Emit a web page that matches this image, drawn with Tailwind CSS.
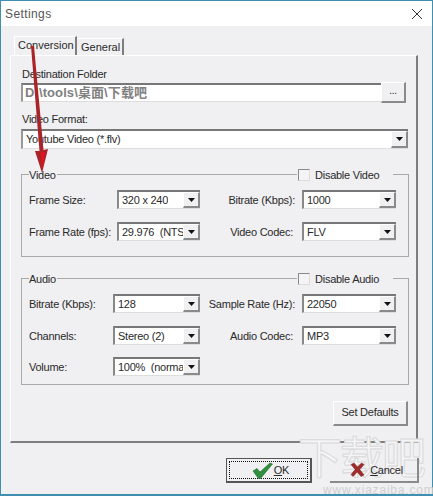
<!DOCTYPE html>
<html><head><meta charset="utf-8"><script src="https://cdn.jsdelivr.net/npm/@tailwindcss/browser@4"></script></head>
<body class="w-[433px] h-[496px] overflow-hidden">
<div class="relative w-[433px] h-[496px] flex flex-col border border-[#3f8fb0] border-b-2 bg-[#f0eff1] text-[#2a2a2a] text-[11px] leading-[14px] tracking-[-0.25px] font-['Liberation_Sans','Noto_Sans_CJK_SC',sans-serif]">
  <!-- watermark -->
  <div class="absolute left-[297px] top-[429px] text-[44px] leading-[50px] whitespace-nowrap tracking-[-2px] text-[#f5f5f6] [-webkit-text-stroke:1px_#d8d8da] font-['Noto_Sans_CJK_SC',sans-serif]">下载吧</div>
  <div class="absolute left-[322px] top-[484px] text-[12px] leading-[11px] text-[#cfcfd1] whitespace-nowrap tracking-[0.8px]">www.xiazaiba.com</div>
  <!-- title -->
  <div class="h-[25px] shrink-0 bg-white flex items-center justify-between pl-[4px] pr-[9px]">
    <span class="text-[12px] text-[#555] tracking-[0.4px]">Settings</span>
    <svg class="w-[12px] h-[12px]" viewBox="0 0 12 12" fill="none" stroke="#333" stroke-width="1"><path d="M1 1 11 11M11 1 1 11"/></svg>
  </div>
  <div class="flex-1 flex flex-col px-[9px] pt-[10px] min-h-0">
    <!-- tabs -->
    <div class="flex items-end h-[19px] pl-[4px] shrink-0 relative z-10">
      <div class="w-[63px] h-[19px] pl-[3px] pt-[1px] bg-[#f0eff1] border-t border-l border-white border-r-2 border-r-[#7d7d7d] tracking-normal">Conversion</div>
      <div class="w-[47px] h-[17px] pl-[4px] pt-[1px] bg-[#f0eff1] border-t border-white border-r-2 border-r-[#7d7d7d] tracking-normal">General</div>
    </div>
    <!-- page -->
    <div class="w-[408px] h-[388px] shrink-0 border border-l-white border-t-white border-r-2 border-r-[#7d7d7d] border-b-2 border-b-[#7d7d7d] px-[10px] pt-[11px]">
      <div class="h-[14px] pl-[1px]">Destination Folder</div>
      <div class="flex items-center mt-[1px] h-[21px]">
        <div class="w-[364px] h-[19px] bg-white border-t-2 border-t-[#777] border-l-2 border-l-[#999] border-b border-b-[#ddd] pl-[2px] font-bold text-[#808080] text-[13px] leading-[16px] tracking-[0.1px]">D:\tools\桌面\下载吧</div>
        <div class="w-[25px] h-[21px] bg-[#f0eff1] border-t border-l border-white border-r-2 border-b-2 border-r-[#8a8a8a] border-b-[#8a8a8a] text-[10px] text-center leading-[15px]">...</div>
      </div>
      <div class="h-[14px] mt-[9px] pl-[1px]">Video Format:</div>
      <div class="mt-[3px] w-[387px] h-[20px] bg-white border-t-2 border-t-[#777] border-l-2 border-l-[#999] border-b border-b-[#ddd] flex justify-between">
        <span class="pl-[3px] leading-[17px]">Youtube Video (*.flv)</span>
        <span class="w-[17px] h-[17px] bg-[#f0eff1] border-t border-l border-white border-r-2 border-b-2 border-r-[#8a8a8a] border-b-[#8a8a8a] flex items-center justify-center"><svg width="7" height="4" viewBox="0 0 7 4"><path d="M0 0h7L3.5 4z" fill="#111"/></svg></span>
      </div>
      <!-- Video -->
      <div class="relative mt-[25px] w-[388px] h-[83px] border border-[#a9a9a9] pt-[15px]">
        <span class="absolute left-[7px] -top-[7px] bg-[#f0eff1] pr-[1px]">Video</span>
        <div class="absolute left-[275px] -top-[7px] w-[96px] h-[14px] bg-[#f0eff1] flex items-center">
          <span class="w-[12px] h-[12px] ml-[1px] bg-[#f4f3f5] border-t border-l border-[#8a8a8a] border-r border-r-[#ddd] border-b border-b-[#ddd]"></span><span class="ml-[5px] whitespace-nowrap">Disable Video</span>
        </div>
        <div class="flex h-[19px] items-center">
          <span class="w-[95px] pl-[7px] shrink-0">Frame Size:</span>
          <div class="w-[83px] h-[19px] shrink-0 bg-white border-t-2 border-t-[#777] border-l-2 border-l-[#888] border-b border-b-[#ddd] flex justify-between"><span class="pl-[3px] leading-[16px] overflow-hidden whitespace-nowrap">320 x 240</span><span class="w-[17px] h-[16px] shrink-0 bg-[#f0eff1] border-t border-l border-white border-r-2 border-b-2 border-r-[#8a8a8a] border-b-[#8a8a8a] flex items-center justify-center"><svg width="7" height="4" viewBox="0 0 7 4"><path d="M0 0h7L3.5 4z" fill="#111"/></svg></span></div>
          <span class="w-[102px] shrink-0 text-right pr-[7px] whitespace-nowrap">Bitrate (Kbps):</span>
          <div class="w-[94px] h-[19px] shrink-0 bg-white border-t-2 border-t-[#777] border-l-2 border-l-[#888] border-b border-b-[#ddd] flex justify-between"><span class="pl-[3px] leading-[16px]">1000</span><span class="w-[17px] h-[16px] shrink-0 bg-[#f0eff1] border-t border-l border-white border-r-2 border-b-2 border-r-[#8a8a8a] border-b-[#8a8a8a] flex items-center justify-center"><svg width="7" height="4" viewBox="0 0 7 4"><path d="M0 0h7L3.5 4z" fill="#111"/></svg></span></div>
        </div>
        <div class="flex h-[19px] items-center mt-[13px]">
          <span class="w-[95px] pl-[7px] shrink-0 whitespace-nowrap">Frame Rate (fps):</span>
          <div class="w-[83px] h-[19px] shrink-0 bg-white border-t-2 border-t-[#777] border-l-2 border-l-[#888] border-b border-b-[#ddd] flex justify-between"><span class="pl-[3px] leading-[16px] overflow-hidden whitespace-nowrap">29.976&nbsp; (NTSC)</span><span class="w-[17px] h-[16px] shrink-0 bg-[#f0eff1] border-t border-l border-white border-r-2 border-b-2 border-r-[#8a8a8a] border-b-[#8a8a8a] flex items-center justify-center"><svg width="7" height="4" viewBox="0 0 7 4"><path d="M0 0h7L3.5 4z" fill="#111"/></svg></span></div>
          <span class="w-[102px] shrink-0 text-right pr-[9px] whitespace-nowrap">Video Codec:</span>
          <div class="w-[94px] h-[19px] shrink-0 bg-white border-t-2 border-t-[#777] border-l-2 border-l-[#888] border-b border-b-[#ddd] flex justify-between"><span class="pl-[3px] leading-[16px]">FLV</span><span class="w-[17px] h-[16px] shrink-0 bg-[#f0eff1] border-t border-l border-white border-r-2 border-b-2 border-r-[#8a8a8a] border-b-[#8a8a8a] flex items-center justify-center"><svg width="7" height="4" viewBox="0 0 7 4"><path d="M0 0h7L3.5 4z" fill="#111"/></svg></span></div>
        </div>
      </div>
      <!-- Audio -->
      <div class="relative mt-[21px] w-[388px] h-[107px] border border-[#a9a9a9] pt-[15px]">
        <span class="absolute left-[7px] -top-[7px] bg-[#f0eff1] pr-[1px]">Audio</span>
        <div class="absolute left-[275px] -top-[7px] w-[96px] h-[14px] bg-[#f0eff1] flex items-center">
          <span class="w-[12px] h-[12px] ml-[1px] bg-[#f4f3f5] border-t border-l border-[#8a8a8a] border-r border-r-[#ddd] border-b border-b-[#ddd]"></span><span class="ml-[5px] whitespace-nowrap">Disable Audio</span>
        </div>
        <div class="flex h-[19px] items-center">
          <span class="w-[91px] pl-[7px] shrink-0 whitespace-nowrap">Bitrate (Kbps):</span>
          <div class="w-[87px] h-[19px] shrink-0 bg-white border-t-2 border-t-[#777] border-l-2 border-l-[#888] border-b border-b-[#ddd] flex justify-between"><span class="pl-[3px] leading-[16px]">128</span><span class="w-[17px] h-[16px] shrink-0 bg-[#f0eff1] border-t border-l border-white border-r-2 border-b-2 border-r-[#8a8a8a] border-b-[#8a8a8a] flex items-center justify-center"><svg width="7" height="4" viewBox="0 0 7 4"><path d="M0 0h7L3.5 4z" fill="#111"/></svg></span></div>
          <span class="w-[102px] shrink-0 text-right pr-[7px] whitespace-nowrap">Sample Rate (Hz):</span>
          <div class="w-[94px] h-[19px] shrink-0 bg-white border-t-2 border-t-[#777] border-l-2 border-l-[#888] border-b border-b-[#ddd] flex justify-between"><span class="pl-[3px] leading-[16px]">22050</span><span class="w-[17px] h-[16px] shrink-0 bg-[#f0eff1] border-t border-l border-white border-r-2 border-b-2 border-r-[#8a8a8a] border-b-[#8a8a8a] flex items-center justify-center"><svg width="7" height="4" viewBox="0 0 7 4"><path d="M0 0h7L3.5 4z" fill="#111"/></svg></span></div>
        </div>
        <div class="flex h-[19px] items-center mt-[13px]">
          <span class="w-[91px] pl-[7px] shrink-0">Channels:</span>
          <div class="w-[87px] h-[19px] shrink-0 bg-white border-t-2 border-t-[#777] border-l-2 border-l-[#888] border-b border-b-[#ddd] flex justify-between"><span class="pl-[3px] leading-[16px]">Stereo (2)</span><span class="w-[17px] h-[16px] shrink-0 bg-[#f0eff1] border-t border-l border-white border-r-2 border-b-2 border-r-[#8a8a8a] border-b-[#8a8a8a] flex items-center justify-center"><svg width="7" height="4" viewBox="0 0 7 4"><path d="M0 0h7L3.5 4z" fill="#111"/></svg></span></div>
          <span class="w-[102px] shrink-0 text-right pr-[9px] whitespace-nowrap">Audio Codec:</span>
          <div class="w-[94px] h-[19px] shrink-0 bg-white border-t-2 border-t-[#777] border-l-2 border-l-[#888] border-b border-b-[#ddd] flex justify-between"><span class="pl-[3px] leading-[16px]">MP3</span><span class="w-[17px] h-[16px] shrink-0 bg-[#f0eff1] border-t border-l border-white border-r-2 border-b-2 border-r-[#8a8a8a] border-b-[#8a8a8a] flex items-center justify-center"><svg width="7" height="4" viewBox="0 0 7 4"><path d="M0 0h7L3.5 4z" fill="#111"/></svg></span></div>
        </div>
        <div class="flex h-[19px] items-center mt-[12px]">
          <span class="w-[91px] pl-[7px] shrink-0">Volume:</span>
          <div class="w-[87px] h-[19px] shrink-0 bg-white border-t-2 border-t-[#777] border-l-2 border-l-[#888] border-b border-b-[#ddd] flex justify-between"><span class="pl-[3px] leading-[16px] overflow-hidden whitespace-nowrap">100%&nbsp; (normal)</span><span class="w-[17px] h-[16px] shrink-0 bg-[#f0eff1] border-t border-l border-white border-r-2 border-b-2 border-r-[#8a8a8a] border-b-[#8a8a8a] flex items-center justify-center"><svg width="7" height="4" viewBox="0 0 7 4"><path d="M0 0h7L3.5 4z" fill="#111"/></svg></span></div>
        </div>
      </div>
      <div class="flex justify-end mt-[16px] w-[387px]">
        <div class="w-[75px] h-[25px] bg-[#f0eff1] border-t border-l border-white border-r-2 border-b-2 border-r-[#8a8a8a] border-b-[#8a8a8a] text-center leading-[21px]">Set Defaults</div>
      </div>
    </div>
    <!-- bottom buttons -->
    <div class="flex pl-[216px] mt-[15px] gap-[18px] relative z-10">
      <div class="w-[86px] h-[25px] border border-[#555] border-r-2 border-b-2 p-[2px] bg-[#f0eff1]">
        <div class="w-full h-full border border-dotted border-[#111] flex items-center justify-center gap-[1px] pl-[4px]">
          <svg width="21" height="17" viewBox="0 0 21 17"><path d="M1 9 5 6.5 8 10 18 1l2.5 1L8.5 16.5H6.5z" fill="#2f8f3f" stroke="#1d6a2c" stroke-width=".6"/></svg><span><u>O</u>K</span>
        </div>
      </div>
      <div class="w-[89px] h-[25px] border-r-2 border-b-2 border-r-[#8a8a8a] border-b-[#8a8a8a] flex items-center justify-center gap-[5px] pl-[6px]">
        <svg width="15" height="15" viewBox="0 0 15 15"><path d="M1 2.5 4 1l3.5 4L11.5 1 14 2.5 9.8 7.5 14 13l-3 1.5L7.3 10 3 14.5 1 12.5 5.2 7.5z" fill="#a02b2b" stroke="#7a1f1f" stroke-width=".5"/></svg><span><u>C</u>ancel</span>
      </div>
    </div>
  </div>
  <!-- arrow -->
  <svg class="absolute -left-px -top-px pointer-events-none z-20" width="60" height="180" viewBox="0 0 60 180">
    <path d="M31 46 34 46 43.5 150 48 149 42 173 35 151 39.5 151z" fill="#a92328"/>
    <path d="M41 152 45 152 42 170z" fill="#e8101c"/>
  </svg>
</div>
</body></html>
